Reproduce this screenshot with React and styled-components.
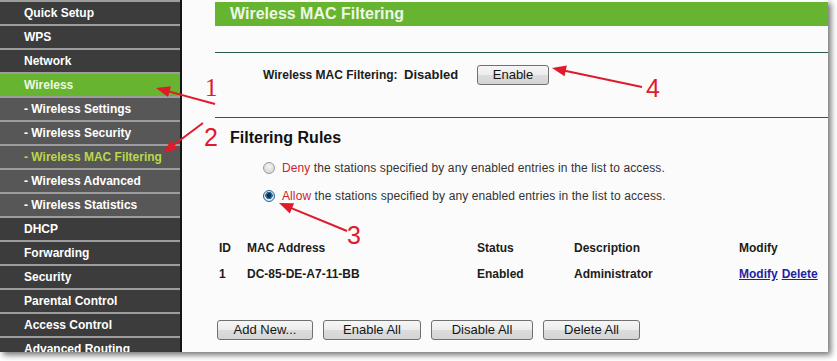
import React from "react";
import styled, { createGlobalStyle } from "styled-components";

const Global = createGlobalStyle`
  html, body { margin: 0; padding: 0; background: #ffffff; }
  body { font-family: "Liberation Sans", Arial, sans-serif; }
  * { box-sizing: border-box; }
`;

const Page = styled.div`
  position: relative;
  width: 837px;
  height: 361px;
  overflow: hidden;
`;

const Panel = styled.div`
  display: flex;
  width: 828px;
  height: 352px;
  overflow: hidden;
  box-shadow: 3px 3px 6px rgba(0, 0, 0, 0.55);
`;

const Sidebar = styled.nav`
  width: 182px;
  flex: none;
  background: #3c3c3c;
  border-right: 2px solid #161616;
  display: flex;
  flex-direction: column;
`;

const MenuItem = styled.div`
  flex: none;
  height: 24px;
  border-top: 2px solid #9d9d9d;
  line-height: 22px;
  padding-left: 24px;
  font-size: 12px;
  font-weight: bold;
  white-space: nowrap;
  background: ${(p) => (p.$active ? "#66b42f" : p.$sub ? "#575757" : "#3c3c3c")};
  color: ${(p) => (p.$current ? "#b9d84a" : p.$active ? "#eef7e4" : "#ffffff")};
`;

const Main = styled.main`
  flex: 1;
  background: #fbfbfb;
  padding: 2px 0 0 33px;
  display: flex;
  flex-direction: column;
`;

const TitleBar = styled.div`
  height: 24px;
  background: #66b42f;
  color: #eef7e6;
  font-size: 16px;
  font-weight: bold;
  line-height: 24px;
  padding-left: 15px;
`;

const Rule = styled.div`
  height: 1px;
  background: #2b5a52;
  margin-top: ${(p) => p.$top || 0}px;
`;

const StatusRow = styled.div`
  height: 64px;
  padding: 12px 0 0 48px;
  display: grid;
  grid-template-columns: 141px 73px auto;
  align-items: start;
`;

const Label = styled.span`
  font-size: 12px;
  font-weight: bold;
  color: #1c1c1c;
  line-height: 20px;
`;

const Value = styled.span`
  font-size: 13px;
  font-weight: bold;
  color: #1c1c1c;
  line-height: 20px;
`;

const Button = styled.button`
  height: 20px;
  width: ${(p) => p.$w}px;
  padding: 0;
  font-family: "Liberation Sans", Arial, sans-serif;
  font-size: 13px;
  color: #151515;
  border: 1px solid #707070;
  border-radius: 3px;
  background: linear-gradient(#f6f6f6 0%, #ececec 50%, #dcdcdc 51%, #d4d4d4 100%);
  line-height: 18px;
`;

const SectionTitle = styled.h2`
  margin: 10px 0 0 0;
  padding-left: 15px;
  font-size: 16px;
  font-weight: bold;
  line-height: 20px;
  color: #111;
`;

const RadioList = styled.div`
  margin-top: 6px;
  padding-left: 48px;
  display: flex;
  flex-direction: column;
`;

const RadioRow = styled.label`
  height: 28px;
  display: flex;
  align-items: center;
  gap: 7px;
  font-size: 12px;
  letter-spacing: 0.1px;
  color: #333;
`;

const Radio = styled.span`
  width: 12px;
  height: 12px;
  border-radius: 50%;
  flex: none;
  border: 1px solid ${(p) => (p.$on ? "#2d5f86" : "#9c9c9c")};
  background: ${(p) =>
    p.$on
      ? "radial-gradient(circle at 50% 45%, #0e2f4e 0 2px, #2d6a9a 2.5px 3.5px, #dfe9f2 4px)"
      : "radial-gradient(circle at 50% 35%, #f4f4f4 0, #cfcfcf 100%)"};
`;

const Red = styled.span`
  color: #c9252c;
`;

const Table = styled.div`
  margin: 25px 0 0 4px;
  display: grid;
  grid-template-columns: 28px 230px 97px 165px auto;
  grid-auto-rows: 26px;
  align-items: center;
  font-size: 12px;
  font-weight: bold;
  color: #1c1c1c;
`;

const Link = styled.a`
  color: #1f1fa3;
  text-decoration: underline;
  margin-right: 4px;
`;

const ButtonRow = styled.div`
  margin: 33px 0 0 2px;
  display: flex;
  gap: 10px;
`;

const Overlay = styled.svg`
  position: absolute;
  left: 0;
  top: 0;
  pointer-events: none;
`;

const Num = styled.text`
  font-family: ${(p) => (p.$serif ? '"Liberation Serif", serif' : '"Liberation Sans", sans-serif')};
  font-size: 25px;
  fill: #e01a2b;
`;

function Arrow({ x1, y1, x2, y2 }) {
  const dx = x2 - x1;
  const dy = y2 - y1;
  const len = Math.hypot(dx, dy);
  const ux = dx / len;
  const uy = dy / len;
  const hl = 14;
  const hw = 5.5;
  const bx = x2 - ux * hl;
  const by = y2 - uy * hl;
  const pts = `${x2},${y2} ${bx - uy * hw},${by + ux * hw} ${bx + uy * hw},${by - ux * hw}`;
  return (
    <g>
      <line x1={x1} y1={y1} x2={bx + ux * 2} y2={by + uy * 2} stroke="#e01a2b" strokeWidth="2" />
      <polygon points={pts} fill="#e01a2b" />
    </g>
  );
}

const menu = [
  { t: "Quick Setup" },
  { t: "WPS" },
  { t: "Network" },
  { t: "Wireless", active: true },
  { t: "- Wireless Settings", sub: true },
  { t: "- Wireless Security", sub: true },
  { t: "- Wireless MAC Filtering", sub: true, current: true },
  { t: "- Wireless Advanced", sub: true },
  { t: "- Wireless Statistics", sub: true },
  { t: "DHCP" },
  { t: "Forwarding" },
  { t: "Security" },
  { t: "Parental Control" },
  { t: "Access Control" },
  { t: "Advanced Routing" },
];

export default function App() {
  return (
    <Page>
      <Global />
      <Panel>
        <Sidebar>
          {menu.map((m) => (
            <MenuItem key={m.t} $sub={m.sub} $active={m.active} $current={m.current}>
              {m.t}
            </MenuItem>
          ))}
        </Sidebar>
        <Main>
          <TitleBar>Wireless MAC Filtering</TitleBar>
          <Rule $top={26} />
          <StatusRow>
            <Label>Wireless MAC Filtering:</Label>
            <Value>Disabled</Value>
            <Button $w={72}>Enable</Button>
          </StatusRow>
          <Rule />
          <SectionTitle>Filtering Rules</SectionTitle>
          <RadioList>
            <RadioRow>
              <Radio />
              <span>
                <Red>Deny</Red> the stations specified by any enabled entries in the list to access.
              </span>
            </RadioRow>
            <RadioRow>
              <Radio $on />
              <span>
                <Red>Allow</Red> the stations specified by any enabled entries in the list to access.
              </span>
            </RadioRow>
          </RadioList>
          <Table>
            <span>ID</span>
            <span>MAC Address</span>
            <span>Status</span>
            <span>Description</span>
            <span>Modify</span>
            <span>1</span>
            <span>DC-85-DE-A7-11-BB</span>
            <span>Enabled</span>
            <span>Administrator</span>
            <span>
              <Link>Modify</Link>
              <Link>Delete</Link>
            </span>
          </Table>
          <ButtonRow>
            <Button $w={96}>Add New...</Button>
            <Button $w={98}>Enable All</Button>
            <Button $w={102}>Disable All</Button>
            <Button $w={97}>Delete All</Button>
          </ButtonRow>
        </Main>
      </Panel>
      <Overlay width="837" height="361" viewBox="0 0 837 361">
        <Arrow x1={215} y1={104} x2={156} y2={88} />
        <Arrow x1={203} y1={123} x2={163} y2={153} />
        <Arrow x1={347} y1={231} x2={279} y2={203} />
        <Arrow x1={642} y1={87} x2={552} y2={68} />
        <Num x="205" y="96" $serif>1</Num>
        <Num x="204" y="146">2</Num>
        <Num x="347" y="244">3</Num>
        <Num x="646" y="97">4</Num>
      </Overlay>
    </Page>
  );
}
